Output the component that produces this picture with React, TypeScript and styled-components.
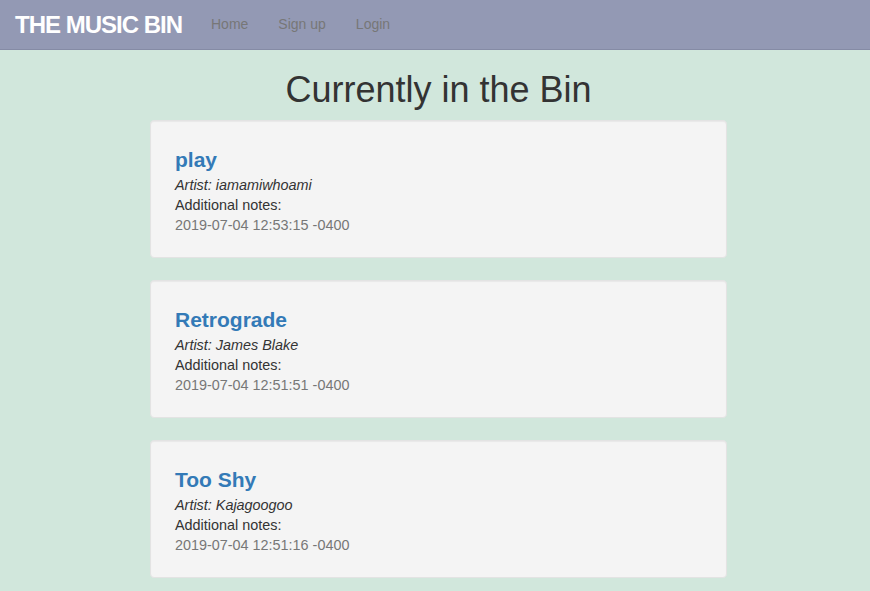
import React from 'react';
import styled, { createGlobalStyle } from 'styled-components';

const GlobalStyle = createGlobalStyle`
  html, body {
    margin: 0;
    padding: 0;
    background: #d1e7dc;
    font-family: "Liberation Sans", Arial, sans-serif;
    font-size: 14px;
    line-height: 20px;
    color: #333;
  }
  * { box-sizing: border-box; }
`;

const NavBar = styled.nav`
  display: flex;
  align-items: center;
  height: 50px;
  background: #9399b4;
  border-bottom: 1px solid #858ba5;
`;

const Brand = styled.a`
  padding: 0 14px 0 15px;
  font-size: 24px;
  font-weight: bold;
  letter-spacing: -1px;
  color: #fff;
  text-decoration: none;
  line-height: 49px;
`;

const NavLink = styled.a`
  padding: 0 15px;
  color: #777;
  text-decoration: none;
  line-height: 49px;
`;

const Main = styled.main`
  width: 577px;
  margin-left: 150px;
`;

const Heading = styled.h1`
  margin: 20px 0 10px;
  font-size: 36px;
  font-weight: 500;
  line-height: 1.1;
  text-align: center;
`;

const Well = styled.div`
  margin-bottom: 22px;
  padding: 27px 24px 22px;
  font-size: 14.4px;
  background: #f4f4f4;
  border: 1px solid #e3e3e3;
  border-radius: 4px;
  box-shadow: inset 0 1px 1px rgba(0, 0, 0, 0.05);
`;

const Title = styled.h3`
  margin: 0 0 4px;
  font-size: 21px;
  font-weight: bold;
  line-height: 1.1;
  color: #337ab7;
`;

const Artist = styled.div`
  font-style: italic;
`;

const Stamp = styled.div`
  color: #777;
`;

const songs = [
  { title: 'play', artist: 'iamamiwhoami', date: '2019-07-04 12:53:15 -0400' },
  { title: 'Retrograde', artist: 'James Blake', date: '2019-07-04 12:51:51 -0400' },
  { title: 'Too Shy', artist: 'Kajagoogoo', date: '2019-07-04 12:51:16 -0400' },
];

const App: React.FC = () => {
  return (
    <React.Fragment>
      <GlobalStyle />
      <NavBar>
        <Brand href="#">THE MUSIC BIN</Brand>
        <NavLink href="#">Home</NavLink>
        <NavLink href="#">Sign up</NavLink>
        <NavLink href="#">Login</NavLink>
      </NavBar>
      <Main>
        <Heading>Currently in the Bin</Heading>
        {songs.map((song, index: number) => (
          <Well key={index}>
            <Title>{song.title}</Title>
            <Artist>Artist: {song.artist}</Artist>
            <div>Additional notes:</div>
            <Stamp>{song.date}</Stamp>
          </Well>
        ))}
      </Main>
    </React.Fragment>
  );
};

export default App;
